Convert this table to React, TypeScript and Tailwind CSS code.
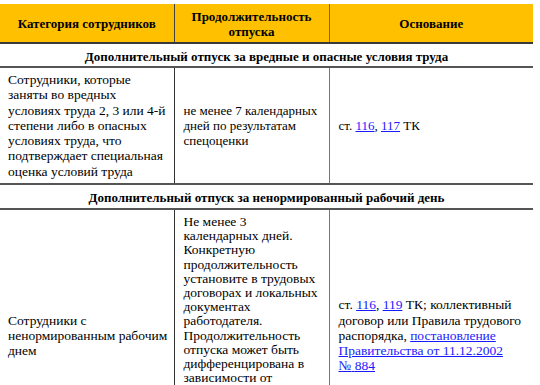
import React from "react";

const A = ({ children }: { children: React.ReactNode }) => (
  <a href="#" className="text-[#1a1aff] underline">
    {children}
  </a>
);

export default function App() {
  return (
    <div className="bg-white w-[540px] h-[385px] overflow-hidden pt-[4px] text-black font-['Liberation_Serif','Times_New_Roman',serif]">
      <table className="w-[533px] border-collapse table-fixed text-[13px] font-['Liberation_Serif','Times_New_Roman',serif]">
        <colgroup>
          <col className="w-[174px]" />
          <col className="w-[155px]" />
          <col />
        </colgroup>
        <thead>
          <tr className="bg-[#ffc000] h-[39px] border-b-2 border-b-[#3a3a3a]">
            <th className="font-bold text-center align-middle leading-[15px] border-r border-r-[#444]">Категория сотрудников</th>
            <th className="font-bold text-center align-middle leading-[15px] border-r border-r-[#8a6a00] pt-[2px]">
              Продолжительность
              <br />
              отпуска
            </th>
            <th className="font-bold text-center align-middle leading-[15px]">Основание</th>
          </tr>
        </thead>
        <tbody>
          <tr className="h-[24px] border-b-2 border-b-[#555]">
            <td colSpan={3} className="text-center font-bold align-middle leading-[15px] pt-[3px]">
              Дополнительный отпуск за вредные и опасные условия труда
            </td>
          </tr>
          <tr className="h-[117px] border-b-2 border-b-[#555]">
            <td className="align-middle pl-[8px] pr-[6px] leading-[15.3px] text-[13.5px] border-r border-r-[#333]">
              Сотрудники, которые заняты во вредных условиях труда 2, 3 или 4-й степени либо в опасных условиях труда, что подтверждает специальная оценка условий труда
            </td>
            <td className="align-middle pl-[9px] pr-[4px] leading-[15px] border-r border-r-[#777]">
              не менее 7 календарных дней по результатам спецоценки
            </td>
            <td className="align-middle pl-[9px] pr-[6px] leading-[15px]">
              ст. <A>116</A>, <A>117</A> ТК
            </td>
          </tr>
          <tr className="h-[25px] border-b-2 border-b-[#555]">
            <td colSpan={3} className="text-center font-bold align-middle leading-[15px] pt-[2px]">
              Дополнительный отпуск за ненормированный рабочий день
            </td>
          </tr>
          <tr className="h-[252px]">
            <td className="align-middle pl-[8px] pr-[6px] leading-[15.3px] text-[13.5px] border-r border-r-[#333]">
              Сотрудники с ненормированным рабочим днем
            </td>
            <td className="align-top pl-[9px] pr-[4px] pt-[5px] leading-[14.2px] text-[13.5px] border-r border-r-[#777]">
              Не менее 3 календарных дней. Конкретную продолжительность установите в трудовых договорах и локальных документах работодателя. Продолжительность отпуска может быть дифференцирована в зависимости от должности, объема работы, степени напряженности труда и других условий работы.
            </td>
            <td className="align-middle pl-[9px] pr-[6px] leading-[15.25px] text-[13.5px]">
              ст. <A>116</A>, <A>119</A> ТК; коллективный договор или Правила трудового распорядка, <A>постановление Правительства от 11.12.2002 №{"\u00a0"}884</A>
            </td>
          </tr>
        </tbody>
      </table>
    </div>
  );
}
